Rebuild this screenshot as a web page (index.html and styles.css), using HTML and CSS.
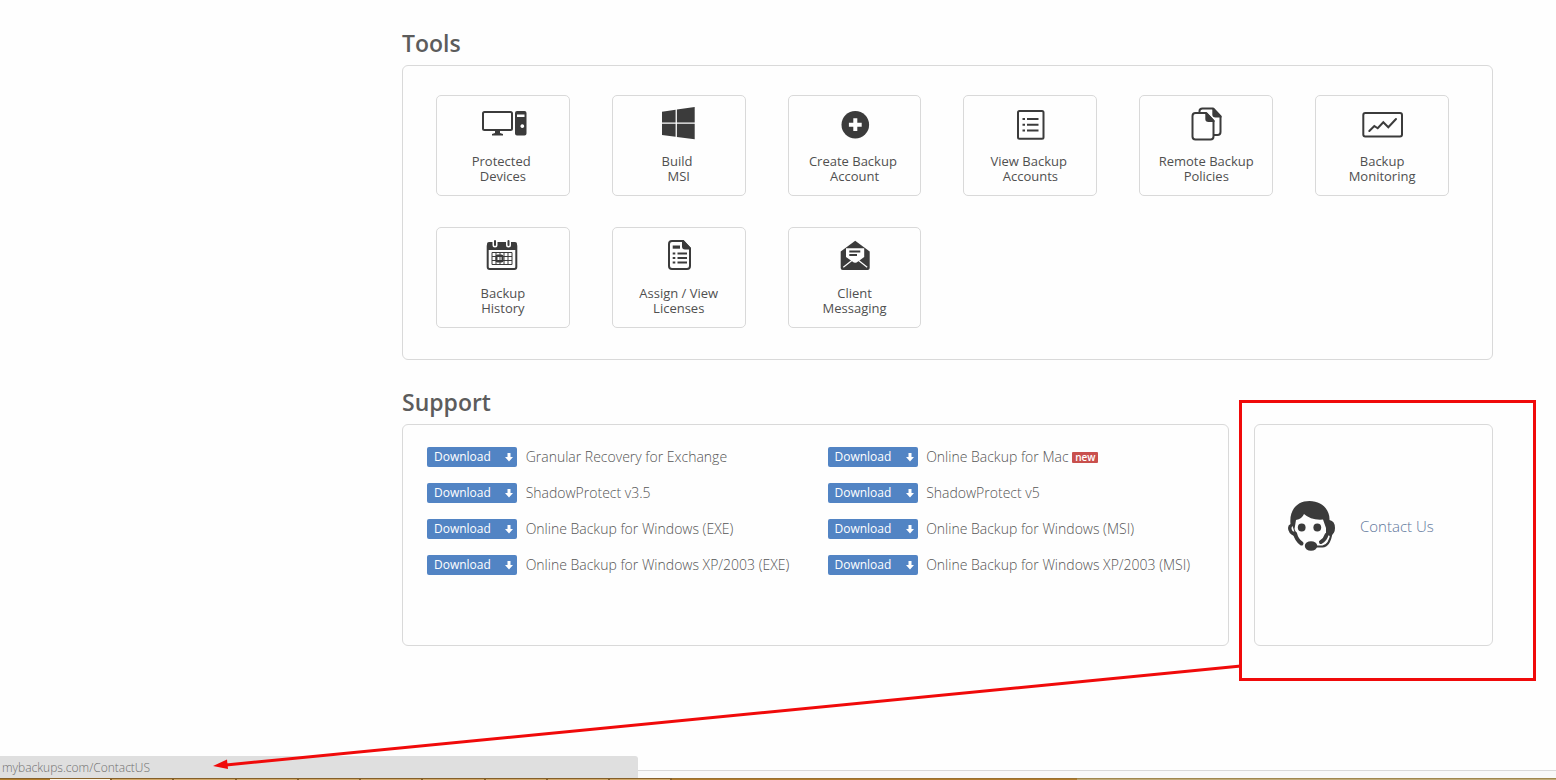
FILE: index.html
```html
<!DOCTYPE html>
<html lang="en">
<head>
    <meta charset="UTF-8">
    <meta name="viewport" content="width=device-width, initial-scale=1.0">
    <title>Backup Tools</title>
    <link rel="stylesheet" href="styles.css">
</head>
<body>
    <main>
        <h2>Tools</h2>
        <section class="panel tools">
            <a class="tool" href="#">
                <svg viewBox="0 0 50 36">
                    <rect class="line" x="5" y="6" width="29" height="18" rx="1.5"/>
                    <path d="M17 24h5v3l3 1v1.500H14v-1.500l3-1z"/>
                    <path fill-rule="evenodd" d="M39 5h7.500q2 0 2 2v20.500q0 2-2 2H39q-2 0-2-2V7q0-2 2-2zM39 8.500v2.500h7.500V8.500zM44.300 18.200a1.900 1.900 0 1 0 .01 0z"/>
                </svg>
                <span>Protected&nbsp;<br>Devices</span>
            </a>
            <a class="tool" href="#">
                <svg viewBox="0 0 50 36">
                    <path d="M8 5.700 21.600 3.800V16.500H8zM22.900 3.600 40.700 1V16.500H22.900zM8 17.700H21.600V30.700L8 29zM22.900 17.700H40.700V33.200L22.900 30.900z"/>
                </svg>
                <span>Build&nbsp;<br>MSI</span>
            </a>
            <a class="tool" href="#">
                <svg viewBox="0 0 50 36">
                    <circle cx="25.300" cy="18.700" r="13.800"/>
                    <path class="cut" d="M25.300 12.300v12.800M18.900 18.700h12.800" stroke-width="4"/>
                </svg>
                <span>Create Backup&nbsp;<br>Account</span>
            </a>
            <a class="tool" href="#">
                <svg viewBox="0 0 50 36">
                    <rect class="line" x="13" y="5" width="25.500" height="27.700" rx="1.500"/>
                    <path class="line" d="M17.500 13H20M22 13h11.500M17.500 18.700H20M22 18.700h11.500M17.500 24.500H20M22 24.500h11.500"/>
                </svg>
                <span>View Backup&nbsp;<br>Accounts</span>
            </a>
            <a class="tool" href="#">
                <svg viewBox="0 0 50 36">
                    <path class="line" d="M18.500 6V5q0-2.500 3-2.500H32l7.500 8V26q0 3-3 3H33"/>
                    <path d="M31.300 2H33l7.500 8v1.500h-6q-3.200 0-3.200-3z"/>
                    <path class="line" d="M14.500 7H25l7.500 8v15.500q0 3-3 3h-15q-3 0-3-3V10q0-3 3-3z"/>
                    <path d="M24.300 6.500H26l7.500 8V16h-6q-3.200 0-3.200-3z"/>
                </svg>
                <span>Remote Backup<br>Policies</span>
            </a>
            <a class="tool" href="#">
                <svg viewBox="0 0 50 36">
                    <rect class="line" x="6.300" y="7" width="38.700" height="23.500" rx="2"/>
                    <path class="line" d="M12.300 25l5-5 3.400 2.300 5.600-6 5 5 7.700-8.300" stroke-linecap="round"/>
                </svg>
                <span>Backup<br>Monitoring</span>
            </a>
            <a class="tool" href="#">
                <svg viewBox="0 0 50 36">
                    <rect class="line" x="9.700" y="6" width="28.600" height="25" rx="2"/>
                    <path d="M9 6q0-2 2-2h26q2 0 2 2v6H9z"/>
                    <path class="cut" d="M17 3v4M30.500 3v4" stroke-width="5" stroke-linecap="round"/>
                    <path class="line" d="M17 3v4M30.500 3v4" stroke-linecap="round"/>
                    <path class="thin" d="M14 14.500h20v12H14zM18 14.500v12M22 14.500v12M26 14.500v12M30 14.500v12M14 18.500h20M14 22.500h20"/>
                    <rect class="line" x="18.500" y="17.500" width="6" height="6" rx="1"/>
                </svg>
                <span>Backup<br>History</span>
            </a>
            <a class="tool" href="#">
                <svg viewBox="0 0 50 36">
                    <path class="line" d="M18 3h11l7 7.500V28q0 3-3 3H18q-3 0-3-3V6q0-3 3-3z"/>
                    <path d="M28 2h1.500l7.500 8v1.500h-6q-3 0-3-3z"/>
                    <path d="M18.700 7.500H26v3.200h-7.300z"/>
                    <path class="line" d="M18.700 15.500h2.600M23.500 15.500H33M18.700 20h2.600M23.500 20H33M18.700 24.500h2.600M23.500 24.500H33"/>
                </svg>
                <span>Assign / View<br>Licenses</span>
            </a>
            <a class="tool" href="#">
                <svg viewBox="0 0 50 36">
                    <path d="M25.200 2.700 39.700 13.500V30q0 2-2 2h-25q-2 0-2-2V13.500z"/>
                    <path class="paper" d="M16 10.300h18.200v8.700l-6.200 4.500q-2.800 2.500-5.600 0L16 19z"/>
                    <path class="cut" d="M22.500 22l-9.200 7.200M28 22l9.200 7.200" stroke-width="1.200"/>
                    <path class="line" d="M19.300 13.500h11M19.300 17h7.700"/>
                </svg>
                <span>Client<br>Messaging</span>
            </a>
        </section>

        <h2>Support</h2>
        <div class="support">
            <ul class="panel downloads">
                <li><a class="btn" href="#">Download <svg viewBox="0 0 8 9"><path d="M2.500 0h3v4H8L4 8.500 0 4h2.500z"/></svg></a> Granular Recovery for Exchange</li>
                <li><a class="btn" href="#">Download <svg viewBox="0 0 8 9"><path d="M2.500 0h3v4H8L4 8.500 0 4h2.500z"/></svg></a> Online Backup for Mac <span class="badge">new</span></li>
                <li><a class="btn" href="#">Download <svg viewBox="0 0 8 9"><path d="M2.500 0h3v4H8L4 8.500 0 4h2.500z"/></svg></a> ShadowProtect v3.5</li>
                <li><a class="btn" href="#">Download <svg viewBox="0 0 8 9"><path d="M2.500 0h3v4H8L4 8.500 0 4h2.500z"/></svg></a> ShadowProtect v5</li>
                <li><a class="btn" href="#">Download <svg viewBox="0 0 8 9"><path d="M2.500 0h3v4H8L4 8.500 0 4h2.500z"/></svg></a> Online Backup for Windows (EXE)</li>
                <li><a class="btn" href="#">Download <svg viewBox="0 0 8 9"><path d="M2.500 0h3v4H8L4 8.500 0 4h2.500z"/></svg></a> Online Backup for Windows (MSI)</li>
                <li><a class="btn" href="#">Download <svg viewBox="0 0 8 9"><path d="M2.500 0h3v4H8L4 8.500 0 4h2.500z"/></svg></a> Online Backup for Windows XP/2003 (EXE)</li>
                <li><a class="btn" href="#">Download <svg viewBox="0 0 8 9"><path d="M2.500 0h3v4H8L4 8.500 0 4h2.500z"/></svg></a> Online Backup for Windows XP/2003 (MSI)</li>
            </ul>
            <div class="panel contact">
                <svg class="agent" viewBox="0 0 48 50">
                    <path d="M2.500 23C1 9 9 0 21.500 0S42 9 41.500 19q5.500 1 5.500 8 0 6-5 8l-4-1.500V27l-3-8.500q-12 1-19-5.500-2 5-8 6L7 25l-.5 3 2.500 6-3 1q-6-3-6-8 0-3 2.500-4z"/>
                    <path class="paper" d="M4.500 25q-2 2 0 5l2 1z"/>
                    <circle cx="13.700" cy="26.500" r="3.900"/>
                    <circle cx="29.300" cy="26.500" r="3.900"/>
                    <path class="line" d="M7 32.500q1.500 6.500 6.500 10" stroke-linecap="round"/>
                    <path class="line" d="M38.500 34q-1.500 5-5.500 7" stroke-linecap="round"/>
                    <path class="line cable" d="M43.500 32q-2 13-9 13.500h-8"/>
                    <ellipse cx="23" cy="45" rx="6.200" ry="4.800"/>
                </svg>
                <a href="/ContactUS">Contact Us</a>
                <div class="callout">
                    <svg viewBox="0 0 1030 112">
                        <path d="M1029 6 14 105" fill="none" stroke="#f00a0a" stroke-width="3"/>
                        <path d="M1 106 15 99.500 16 109z"/>
                    </svg>
                </div>
            </div>
        </div>
    </main>

    <footer>
        <div class="status">mybackups.com/ContactUS</div>
        <div class="taskbar">
            <i class="start"></i>
            <i class="active"></i>
            <i></i><i></i><i></i><i></i><i></i><i></i><i></i><i></i><i></i>
            <i class="empty"></i>
            <i class="tray"></i>
        </div>
    </footer>
</body>
</html>
```
FILE: styles.css
```css
* {
    box-sizing: border-box;
}
body {
    font-family: 'Open Sans', sans-serif;
    margin: 0;
    min-height: 100vh;
    display: flex;
    flex-direction: column;
    background-color: #fefefe;
    color: #4a4a4a;
}
main {
    flex: 1;
    padding: 28px 63px 0 402px;
}
h2 {
    margin: 0 0 7px;
    font-size: 23px;
    line-height: 30px;
    font-weight: 600;
    color: #5c5c5c;
}
a {
    text-decoration: none;
}
svg {
    display: block;
    fill: #3b3b3b;
}
.line {
    fill: none;
    stroke: #3b3b3b;
    stroke-width: 2;
}
.thin {
    fill: none;
    stroke: #3b3b3b;
    stroke-width: 1;
}
.cut {
    fill: none;
    stroke: #fefefe;
}
.paper {
    fill: #fefefe;
}
.panel {
    border: 1px solid #d9d9d9;
    border-radius: 6px;
}
.tools {
    display: grid;
    grid-template-columns: repeat(6, 1fr);
    gap: 31px 42px;
    padding: 29px 43px 31px 33px;
    margin-bottom: 27px;
}
.tool {
    display: flex;
    flex-direction: column;
    align-items: center;
    gap: 12px;
    padding: 10px 0 11px;
    border: 1px solid #d9d9d9;
    border-radius: 5px;
    font-size: 13px;
    line-height: 15px;
    text-align: center;
    color: #505050;
}
.tool svg {
    width: 50px;
    height: 36px;
}
.support {
    display: flex;
    gap: 25px;
}
.downloads {
    flex: 1;
    display: grid;
    grid-template-columns: 1fr 1fr;
    align-content: start;
    row-gap: 16px;
    margin: 0;
    padding: 22px 0 70px 24px;
    list-style: none;
    font-size: 14px;
    font-weight: 300;
    line-height: 20px;
    color: #555;
}
.downloads li {
    display: flex;
    align-items: center;
    white-space: pre;
}
.btn {
    display: flex;
    align-items: center;
    justify-content: space-between;
    width: 90px;
    height: 20px;
    margin-right: 5px;
    padding: 0 4px 0 7px;
    border-radius: 2px;
    background-color: #5284c4;
    color: white;
    font-size: 12px;
    font-weight: 400;
}
.btn svg {
    width: 8px;
    height: 9px;
    fill: white;
}
.badge {
    padding: 0 3px;
    border-radius: 1px;
    background-color: #c9504d;
    color: white;
    font-size: 10px;
    font-weight: 600;
    line-height: 11px;
}
.contact {
    position: relative;
    display: flex;
    align-items: center;
    gap: 24px;
    width: 239px;
    padding: 0 0 18px 33px;
    font-size: 15px;
    font-weight: 300;
}
.contact a {
    color: #5c7499;
}
.agent {
    width: 48px;
    height: 50px;
}
.agent .line {
    stroke-width: 4;
}
.agent .cable {
    stroke-width: 2;
}
/* red marker around the contact card, arrow to the status bar */
.callout {
    position: absolute;
    inset: -25px -44px -36px -16px;
    border: 3px solid #f00a0a;
    pointer-events: none;
    z-index: 2;
}
.callout svg {
    position: absolute;
    top: 257px;
    right: 100%;
    width: 1030px;
    height: 112px;
    fill: #f00a0a;
}
footer {
    position: relative;
    height: 10px;
    padding-top: 7px;
    border-top: 1px solid #d9d9d9;
    background-color: #f9f9f9;
}
.status {
    position: absolute;
    left: 0;
    bottom: 2px;
    width: 41%;
    padding: 1px 0 0 2px;
    border-radius: 0 3px 0 0;
    background-color: #dfdfdf;
    color: #707070;
    font-size: 12px;
    font-weight: 300;
    line-height: 21px;
}
.taskbar {
    display: flex;
    height: 2px;
    background-color: #d0a868;
}
.taskbar i {
    width: 4%;
    border-top: 1px solid #86602a;
    border-right: 2px solid #86602a;
}
.taskbar .start {
    width: 50px;
    background-color: #b07c2c;
    border-right: 0;
}
.taskbar .active {
    background-color: #fff8e8;
}
.taskbar .empty {
    width: 26%;
    background-color: #b07c2c;
    border-color: #9a7030;
    border-right: 0;
}
.taskbar .tray {
    flex: 1;
    background-color: #c0ab78;
    border-color: #a08850;
    border-right: 0;
}
```
